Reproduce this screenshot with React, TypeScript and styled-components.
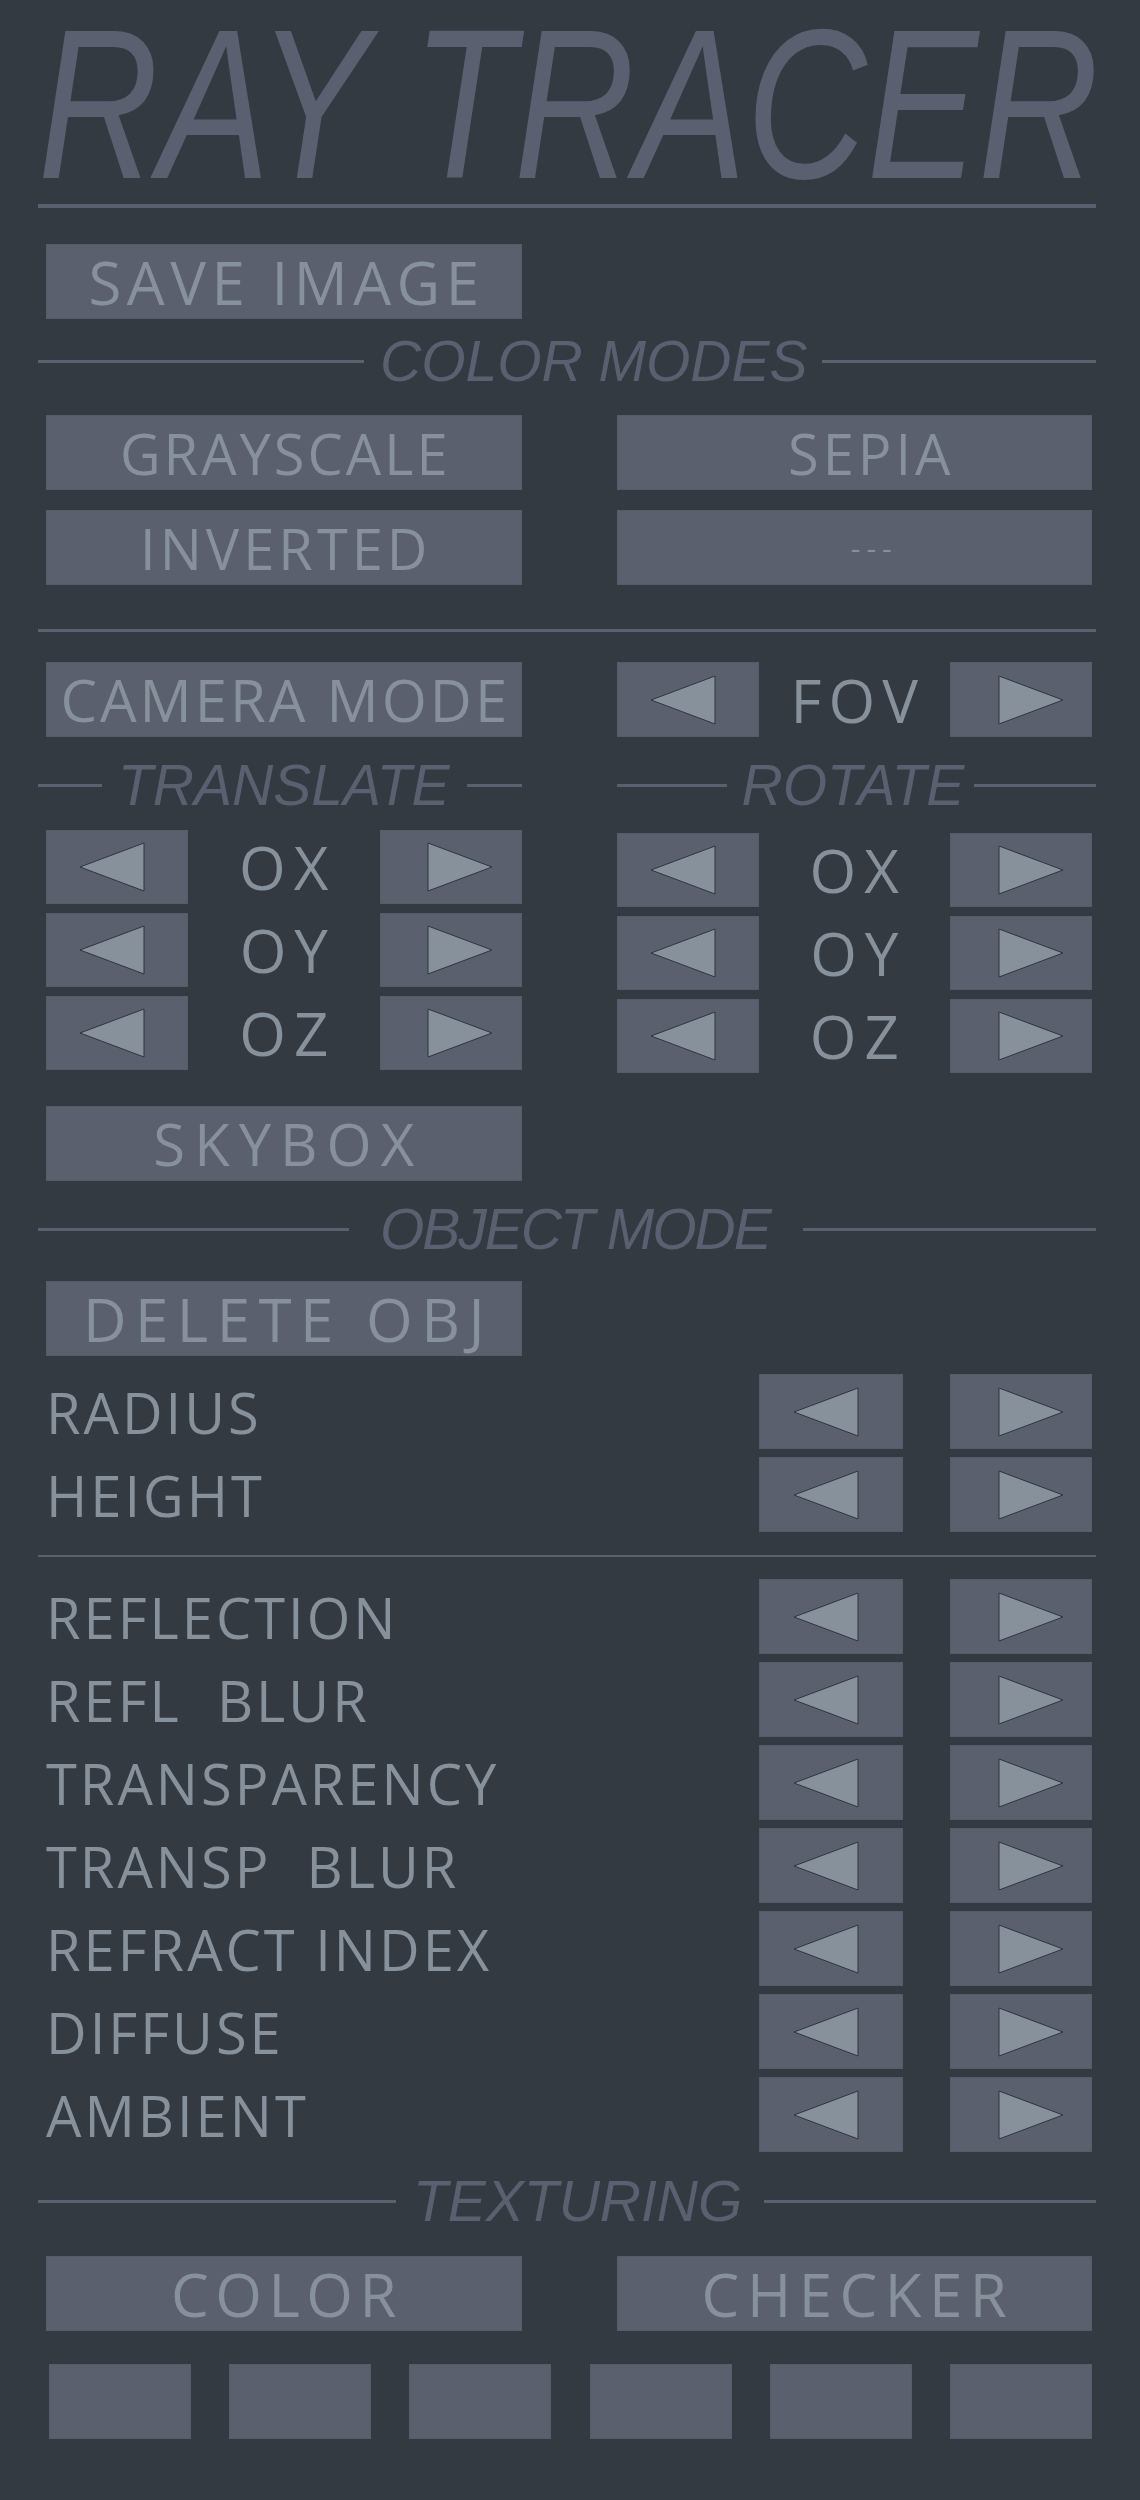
import React from 'react';
import styled, { createGlobalStyle } from 'styled-components';

const BG = '#333a42';
const PANEL = '#5a606d';
const INK = '#86919c';
const DIM = '#5a6070';

const GlobalStyle = createGlobalStyle`
  html, body {
    margin: 0;
    padding: 0;
    background: ${BG};
  }
  body {
    font-family: 'Open Sans', 'Liberation Sans', sans-serif;
  }
`;

const Page = styled.div`
  width: 1140px;
  min-height: 2500px;
  box-sizing: border-box;
  padding: 0 44px 40px 38px;
  background: ${BG};
  display: flex;
  flex-direction: column;
`;

const TitleBox = styled.div`
  height: 204px;
`;

// condensed look: narrow font size, stretched vertically
const Title = styled.h1`
  margin: 0;
  width: max-content;
  font-family: 'Liberation Sans', Arial, sans-serif;
  font-style: italic;
  font-weight: 400;
  font-size: 167px;
  line-height: 162px;
  color: ${DIM};
  white-space: nowrap;
  transform: scaleY(1.2814);
  transform-origin: left top;
`;

const Rule = styled.div<{ $mt?: number; $h?: number }>`
  margin-top: ${(p) => p.$mt ?? 0}px;
  height: ${(p) => p.$h ?? 3}px;
  background: ${DIM};
`;

const Pair = styled.div<{ $mt?: number }>`
  margin-top: ${(p) => p.$mt ?? 0}px;
  padding: 0 4px 0 8px;
  display: grid;
  grid-template-columns: 1fr 1fr;
  column-gap: 95px;
  align-items: start;
`;

const Button = styled.div<{ $size?: number; $ls?: number; $shift?: number }>`
  height: 75px;
  box-sizing: border-box;
  border: 1px solid #555b67;
  background: ${PANEL};
  color: ${INK};
  display: flex;
  align-items: center;
  justify-content: center;
  font-size: ${(p) => p.$size ?? 60}px;
  letter-spacing: ${(p) => p.$ls ?? 4}px;
  padding-left: ${(p) => (p.$ls ?? 4) + (p.$shift ?? 0)}px;
  white-space: nowrap;
  line-height: 1;
`;

const DividerRow = styled.div<{ $mt?: number; $ml?: number; $mr?: number }>`
  margin-top: ${(p) => p.$mt ?? 0}px;
  margin-left: ${(p) => p.$ml ?? 0}px;
  margin-right: ${(p) => p.$mr ?? 0}px;
  height: 60px;
  display: flex;
  align-items: center;
`;

const DividerLine = styled.span<{ $w?: number }>`
  height: 3px;
  background: ${DIM};
  ${(p) => (p.$w ? `width: ${p.$w}px; flex: none;` : 'flex: 1;')}
`;

const DividerText = styled.span<{ $gl: number; $gr: number; $ls?: number }>`
  margin: 0 ${(p) => p.$gr}px 0 ${(p) => p.$gl}px;
  font-family: 'Liberation Sans', Arial, sans-serif;
  font-style: italic;
  font-size: 57px;
  line-height: 60px;
  letter-spacing: ${(p) => p.$ls ?? 0}px;
  color: ${DIM};
  white-space: nowrap;
`;

const Stepper = styled.div<{ $h?: number }>`
  height: ${(p) => p.$h ?? 75}px;
  display: grid;
  grid-template-columns: 142px 1fr 142px;
  align-items: stretch;
`;

const Stack = styled.div<{ $mt?: number }>`
  margin-top: ${(p) => p.$mt ?? 0}px;
  display: flex;
  flex-direction: column;
  gap: 9px;
`;

const StepLabel = styled.div<{ $ls?: number }>`
  display: flex;
  align-items: center;
  justify-content: center;
  color: ${INK};
  font-size: 60px;
  letter-spacing: ${(p) => p.$ls ?? 8}px;
  padding-left: ${(p) => p.$ls ?? 8}px;
  line-height: 1;
`;

const ArrowBox = styled.div<{ $dir: 'left' | 'right' }>`
  box-sizing: border-box;
  border: 1px solid #555b67;
  background: ${PANEL};
  display: flex;
  align-items: center;
  justify-content: center;
  padding-left: ${(p) => (p.$dir === 'right' ? 19 : 0)}px;
  padding-right: ${(p) => (p.$dir === 'left' ? 10 : 0)}px;
`;

const PropList = styled.div<{ $mt?: number }>`
  margin-top: ${(p) => p.$mt ?? 0}px;
  padding: 0 4px 0 8px;
  display: flex;
  flex-direction: column;
  gap: 8px;
`;

const PropRow = styled.div`
  height: 75px;
  display: grid;
  grid-template-columns: 1fr 144px 142px;
  column-gap: 47px;
`;

const PropLabel = styled.div`
  display: flex;
  align-items: center;
  color: ${INK};
  font-size: 56px;
  letter-spacing: 3px;
  white-space: pre;
  line-height: 1;
`;

const Swatches = styled.div<{ $mt?: number }>`
  margin-top: ${(p) => p.$mt ?? 0}px;
  padding: 0 4px 0 11px;
  display: flex;
  justify-content: space-between;
`;

const Swatch = styled.div`
  width: 142px;
  height: 75px;
  box-sizing: border-box;
  border: 1px solid #555b67;
  background: ${PANEL};
`;

const Arrow: React.FC<{ dir: 'left' | 'right' }> = ({ dir }) => (
  <ArrowBox $dir={dir}>
    <svg width="66" height="50" viewBox="0 0 66 50">
      <polygon
        points={dir === 'left' ? '1,25 65,1 65,49' : '1,1 65,25 1,49'}
        fill={INK}
        stroke="#2f353d"
        strokeWidth="1"
        strokeLinejoin="round"
      />
    </svg>
  </ArrowBox>
);

const Divider: React.FC<{
  label: string;
  left: number;
  gl: number;
  gr: number;
  ls?: number;
  mt?: number;
  ml?: number;
  mr?: number;
}> = ({ label, left, gl, gr, ls, mt, ml, mr }) => (
  <DividerRow $mt={mt} $ml={ml} $mr={mr}>
    <DividerLine $w={left} />
    <DividerText $gl={gl} $gr={gr} $ls={ls}>{label}</DividerText>
    <DividerLine />
  </DividerRow>
);

const StepperRow: React.FC<{ label: string; h?: number; ls?: number }> = ({ label, h, ls }) => (
  <Stepper $h={h}>
    <Arrow dir="left" />
    <StepLabel $ls={ls}>{label}</StepLabel>
    <Arrow dir="right" />
  </Stepper>
);

const axes = ['OX', 'OY', 'OZ'];

const props1 = ['RADIUS', 'HEIGHT'];
const props2 = [
  'REFLECTION',
  'REFL  BLUR',
  'TRANSPARENCY',
  'TRANSP  BLUR',
  'REFRACT INDEX',
  'DIFFUSE',
  'AMBIENT',
];

export default function App() {
  return (
    <>
      <GlobalStyle />
      <Page>
        <TitleBox>
          <Title>RAY TRACER</Title>
        </TitleBox>
        <Rule $h={4} />

        <Pair $mt={36}>
          <Button $ls={5.5}>SAVE IMAGE</Button>
        </Pair>

        <Divider label="COLOR MODES" left={326} gl={16} gr={14} mt={12} />

        <Pair $mt={24}>
          <Button $size={56} $ls={3}>GRAYSCALE</Button>
          <Button $size={56} $ls={4} $shift={30}>SEPIA</Button>
        </Pair>
        <Pair $mt={20}>
          <Button $size={56} $ls={4}>INVERTED</Button>
          <Button $size={30} $ls={6} $shift={34}>---</Button>
        </Pair>

        <Rule $mt={44} $h={3} />

        <Pair $mt={30}>
          <Button $size={58} $ls={3}>CAMERA MODE</Button>
          <StepperRow label="FOV" ls={7} />
        </Pair>

        <Pair $mt={18}>
          <div>
            <Divider label="TRANSLATE" left={64} gl={16} gr={17} ml={-8} />
            <Stack $mt={15}>
              {axes.map((a) => (
                <StepperRow key={a} label={a} h={74} />
              ))}
            </Stack>
          </div>
          <div>
            <Divider label="ROTATE" left={110} gl={15} gr={10} mr={-4} />
            <Stack $mt={18}>
              {axes.map((a) => (
                <StepperRow key={a} label={a} h={74} />
              ))}
            </Stack>
          </div>
        </Pair>

        <Pair $mt={33}>
          <Button $size={58} $ls={9}>SKYBOX</Button>
        </Pair>

        <Divider label="OBJECT MODE" left={311} gl={31} gr={33} ls={-2} mt={18} />

        <Pair $mt={22}>
          <Button $ls={8.5}>DELETE OBJ</Button>
        </Pair>

        <PropList $mt={18}>
          {props1.map((p) => (
            <PropRow key={p}>
              <PropLabel>{p}</PropLabel>
              <Arrow dir="left" />
              <Arrow dir="right" />
            </PropRow>
          ))}
        </PropList>

        <Rule $mt={23} $h={2} />

        <PropList $mt={22}>
          {props2.map((p) => (
            <PropRow key={p}>
              <PropLabel>{p}</PropLabel>
              <Arrow dir="left" />
              <Arrow dir="right" />
            </PropRow>
          ))}
        </PropList>

        <Divider label="TEXTURING" left={358} gl={17} gr={22} mt={19} />

        <Pair $mt={25}>
          <Button $ls={6.5}>COLOR</Button>
          <Button $ls={7.5}>CHECKER</Button>
        </Pair>

        <Swatches $mt={33}>
          {Array.from({ length: 6 }, (_, i) => (
            <Swatch key={i} />
          ))}
        </Swatches>
      </Page>
    </>
  );
}
